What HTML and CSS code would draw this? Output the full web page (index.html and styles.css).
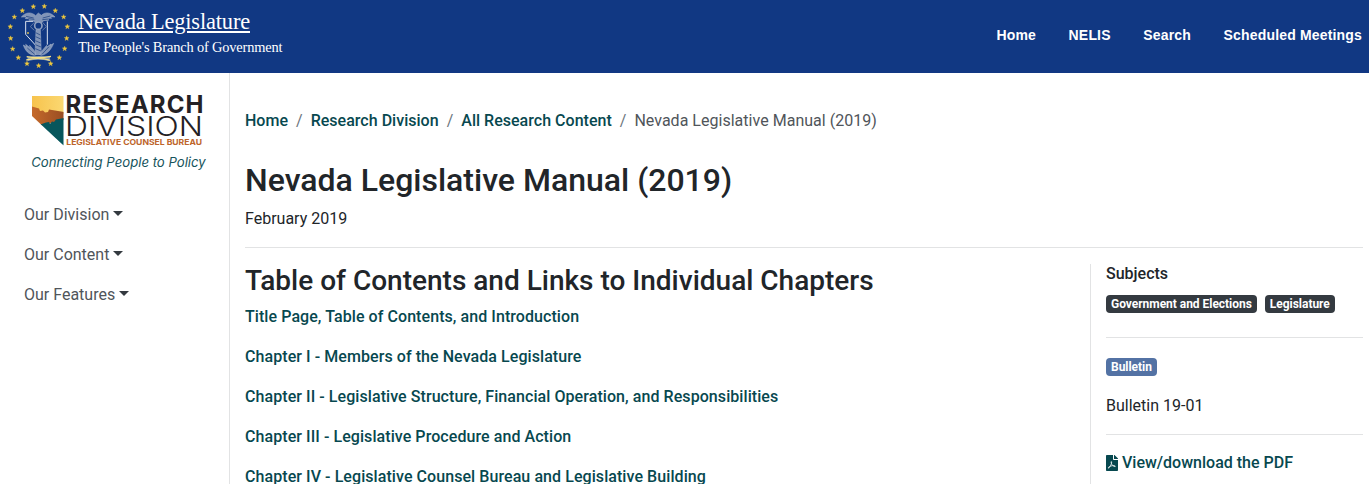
FILE: index.html
```html
<!DOCTYPE html>
<html lang="en">
<head>
<meta charset="utf-8">
<title>Nevada Legislative Manual (2019)</title>
<link rel="stylesheet" href="styles.css">
</head>
<body>
<header class="top">
  <svg class="seal" viewBox="0 0 228 219" aria-hidden="true">
    <defs><path id="star" d="M0-7.5 2-2.4 7.2-2.3 3 1.200 4.500 6.300 0 3.300-4.500 6.300-3 1.200-7.200-2.300-2-2.400Z"/></defs>
    <g fill="#f0c93c" stroke="#f0c93c" stroke-width="1">
      <use href="#star" x="100" y="20"/><use href="#star" x="133" y="19"/><use href="#star" x="67" y="32"/><use href="#star" x="166" y="32"/>
      <use href="#star" x="43" y="51"/><use href="#star" x="191" y="51"/><use href="#star" x="31" y="80"/><use href="#star" x="202" y="80"/>
      <use href="#star" x="32" y="115"/><use href="#star" x="200" y="115"/><use href="#star" x="38" y="147"/><use href="#star" x="194" y="146"/>
      <use href="#star" x="55" y="173"/><use href="#star" x="178" y="173"/><use href="#star" x="81" y="191"/><use href="#star" x="152" y="191"/><use href="#star" x="116" y="197"/>
    </g>
    <path d="M77 64V103L108 137M77 64H100M142 64V134" fill="none" stroke="#dce3ef" stroke-width="3"/>
    <g fill="#8295b8" stroke="#a9b6cd" stroke-width="1.500">
      <path d="M64 51C78 35 95 36 107 47L115 39 124 46C137 34 153 38 165 51L151 50 155 55 144 55 146 61 131 62 124 69H107L101 62 87 61 88 56 76 56 79 51Z"/>
      <path d="M108 88H121L124 164H105Z"/>
      <path d="M103 166C86 164 75 151 70 135L79 140 77 133 90 143 89 136 102 151 108 164ZM124 166C142 163 154 148 161 130L151 136 153 132 139 142 140 136 128 150 119 164Z"/>
    </g>
    <path d="M78 49 101 54M85 56 103 58M151 48 128 54M145 57 127 59M82 144 104 163M147 140 126 163M107 98 121 105M107 110 122 117M106 122 122 129M106 134 123 141M106 146 123 153" stroke="#294b87" stroke-width="2.500"/>
    <circle cx="115" cy="77" r="11" fill="#113883" stroke="#8fa0bf" stroke-width="5"/>
    <path d="M103 67 91 80 103 91M128 67 139 80 127 91" fill="none" stroke="#6279a6" stroke-width="3"/>
    <circle cx="84" cy="99" r="3" fill="#d2b84e"/>
    <path d="M82 171Q115 165 151 171L147 183Q116 176 84 183Z" fill="#7e95b5"/>
    <path d="M80 170Q115 176 153 169M79 180Q116 170 151 181" fill="none" stroke="#f3df86" stroke-width="4"/>
  </svg>
  <div class="brand"><a href="#">Nevada Legislature</a><span>The People's Branch of Government</span></div>
  <nav class="topnav"><a href="#">Home</a><a href="#">NELIS</a><a href="#">Search</a><a href="#">Scheduled Meetings</a></nav>
</header>
<div class="page">
  <aside class="sidebar">
    <svg class="logo" viewBox="0 0 200 100" role="img" aria-label="Research Division">
      <defs>
        <linearGradient id="gold"><stop offset="0" stop-color="#f7c34d"/><stop offset="1" stop-color="#fbd872"/></linearGradient>
        <linearGradient id="rust"><stop offset="0" stop-color="#c56a2b"/><stop offset="1" stop-color="#994d22"/></linearGradient>
        <clipPath id="state"><path d="M12 12H43.500V61.500L21 40.500 12 32Z"/></clipPath>
      </defs>
      <g clip-path="url(#state)">
        <path d="M12 12H44V30H12Z" fill="url(#gold)"/>
        <path d="M12 22.500 19 24.500 20 27 23 26.500 25 28.500 28 28 29 25.500 44 28V36L20 42H12Z" fill="url(#rust)"/>
        <path d="M19 41 26 38.500 29 38 30 40 32 37.500 34 38 36 35.500 44 34V62Z" fill="#07565c"/>
      </g>
      <text class="l-research" x="45.500" y="28.700" textLength="138" lengthAdjust="spacing">RESEARCH</text>
      <text class="l-division" x="45" y="51.900" textLength="138" lengthAdjust="spacingAndGlyphs">DIVISION</text>
      <text class="l-bureau" x="46.300" y="61.300" textLength="135.700" lengthAdjust="spacingAndGlyphs">LEGISLATIVE COUNSEL BUREAU</text>
      <text class="l-tag" x="11.200" y="82.500" textLength="174.500" lengthAdjust="spacingAndGlyphs">Connecting People to Policy</text>
    </svg>
    <nav class="menu"><a href="#">Our Division</a><a href="#">Our Content</a><a href="#">Our Features</a></nav>
  </aside>
  <main class="main">
    <nav class="crumbs"><a href="#">Home</a><i>/</i><a href="#">Research Division</a><i>/</i><a href="#">All Research Content</a><i>/</i><span>Nevada Legislative Manual (2019)</span></nav>
    <h1>Nevada Legislative Manual (2019)</h1>
    <p class="date">February 2019</p>
    <div class="columns">
      <section class="contents">
        <h2>Table of Contents and Links to Individual Chapters</h2>
        <a href="#">Title Page, Table of Contents, and Introduction</a>
        <a href="#">Chapter I - Members of the Nevada Legislature</a>
        <a href="#">Chapter II - Legislative Structure, Financial Operation, and Responsibilities</a>
        <a href="#">Chapter III - Legislative Procedure and Action</a>
        <a href="#">Chapter IV - Legislative Counsel Bureau and Legislative Building</a>
      </section>
      <aside class="details">
        <h3>Subjects</h3>
        <div class="badges"><span class="badge">Government and Elections</span><span class="badge">Legislature</span></div>
        <div class="kind"><span class="badge blue">Bulletin</span><p>Bulletin 19-01</p></div>
        <div class="download"><a href="#"><svg viewBox="0 0 384 512" aria-hidden="true"><path fill="currentColor" d="M224 0v136c0 13 11 24 24 24h136v328c0 13-11 24-24 24H24c-13 0-24-11-24-24V24C0 11 11 0 24 0ZM256 0h6c6 0 12 3 17 7l98 98c4 5 7 11 7 17v6H256Z"/><path d="M84 424C120 390 194 270 181 220 168 192 151 222 176 277 198 328 244 374 293 370 321 353 264 327 197 343 137 353 72 382 73 414 76 424 82 424 84 424Z" fill="none" stroke="#fff" stroke-width="24"/></svg>View/download the PDF</a></div>
      </aside>
    </div>
  </main>
</div>
</body>
</html>
```
FILE: styles.css
```css
* { box-sizing: border-box; }
body { margin: 0; height: 484px; overflow: hidden; background: #fff; color: #212529; font: 400 16px/24px Roboto, sans-serif; }
a { text-decoration: none; color: #07484f; font-weight: 500; }
h1, h2, h3, p { margin: 0; font-weight: 500; }
p { font-weight: 400; }
.top { display: flex; height: 73px; background: #113883; }
.seal { width: 76px; height: 73px; flex: none; }
.brand { display: flex; flex-direction: column; padding: 8px 0 0 2px; font-family: "Liberation Serif", serif; color: #fff; white-space: nowrap; }
.brand a { color: #fff; font-size: 22.400px; line-height: 27px; font-weight: 400; letter-spacing: -.15px; text-decoration: underline; }
.brand span { font-size: 14.400px; line-height: 24px; letter-spacing: -.16px; }
.topnav { display: flex; gap: 32.600px; margin-left: auto; padding: 23px 7px 0 0; }
.topnav a { color: #fff; font: 700 14px/24px "Liberation Sans", sans-serif; letter-spacing: .17px; }
.page { display: flex; height: 411px; }
.sidebar { width: 230px; flex: none; border-right: 1px solid #e2e3e4; padding-top: 11px; }
.logo { display: block; width: 200px; height: 100px; margin-left: 20px; }
.logo text { font-family: Inter, sans-serif; }
.logo .l-research { font-size: 24px; font-weight: 700; fill: #242124; }
.logo .l-division { font-size: 27px; font-weight: 300; fill: #242124; }
.logo .l-bureau { font-size: 7.800px; font-weight: 700; fill: #bd652b; }
.logo .l-tag { font-size: 13px; font-style: italic; fill: #17545c; }
.menu { display: flex; flex-direction: column; gap: 16px; padding: 19px 24px; }
.menu a { font-weight: 400; color: #50555a; }
.menu a::after { content: ""; display: inline-block; margin-left: 4px; vertical-align: 4px; border: 5px solid transparent; border-top-color: #343a40; border-bottom: 0; }
.main { flex: 1; min-width: 0; padding: 36px 6px 0 15px; }
.crumbs { display: flex; gap: 8px; color: #50555a; letter-spacing: .02px; }
.crumbs i { font-style: normal; color: #6c757d; }
h1 { font-size: 32px; line-height: 38px; margin-top: 28px; }
.date { padding: 8px 0 16px; border-bottom: 1px solid #e2e3e4; }
.columns { display: flex; padding-top: 16px; }
.contents { display: flex; flex-direction: column; flex: 1; gap: 16px; }
.contents a { letter-spacing: .07px; }
h2 { font-size: 28px; line-height: 34px; margin-bottom: -9px; }
.details { width: 273px; height: 230px; border-left: 1px solid #e2e3e4; padding-left: 15px; }
h3 { font-size: 16px; line-height: 19px; }
.badges { display: flex; gap: 8px; padding: 12px 0 24px; border-bottom: 1px solid #e2e3e4; }
.badge { display: inline-block; height: 18px; padding: 3px 5px; border-radius: 4px; background: #343a40; color: #fff; font-size: 12px; line-height: 12px; font-weight: 700; letter-spacing: -.03px; white-space: nowrap; }
.blue { background: #5372a4; }
.kind { display: flex; flex-direction: column; align-items: flex-start; gap: 18px; padding: 20px 0 16px; border-bottom: 1px solid #e2e3e4; }
.download { padding-top: 16px; }
.download a { display: flex; align-items: center; gap: 4px; }
.download svg { width: 12px; height: 16px; }
```
